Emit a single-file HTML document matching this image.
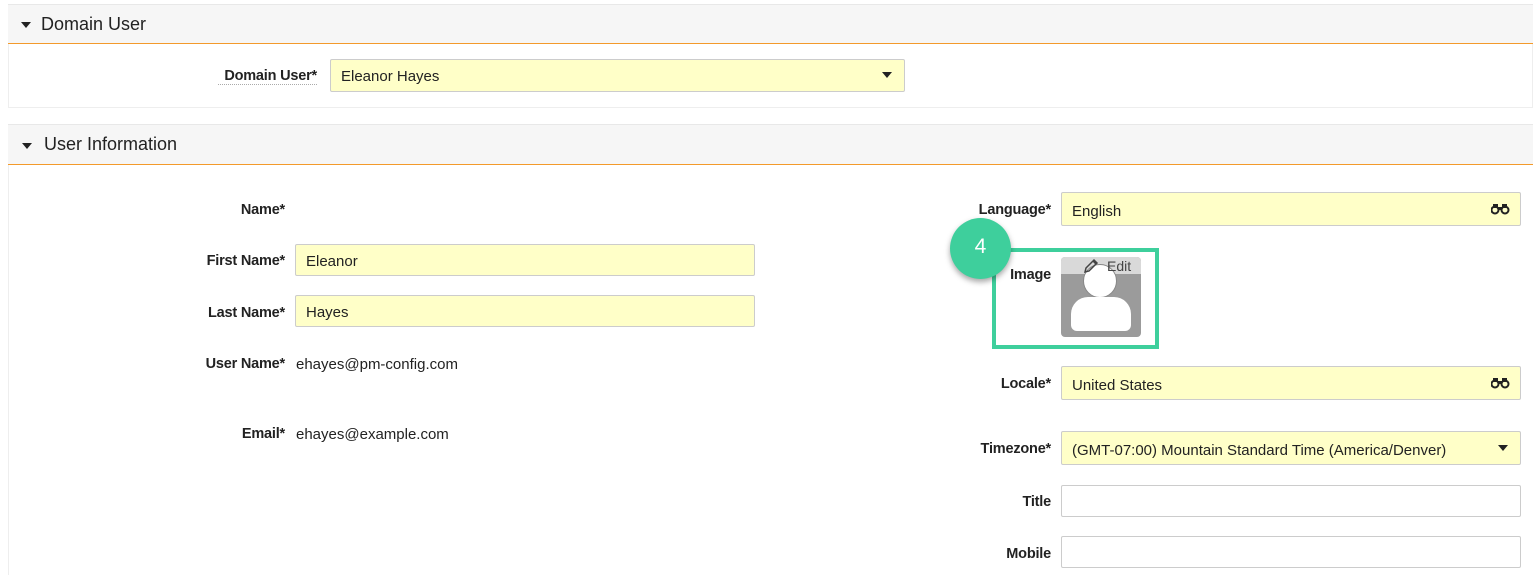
<!DOCTYPE html><html><head><style>
body{margin:0;width:1533px;height:575px;overflow:hidden;background:#fff;font-family:"Liberation Sans",Arial,sans-serif;color:#222;position:relative}
.a{position:absolute}
.hdr{position:absolute;left:8px;right:0;background:#f6f6f6;border-top:1px solid #e8e8e8;border-bottom:1px solid #f39a2b;font-size:18px;color:#222}
.tri{position:absolute;width:0;height:0;border-left:5px solid transparent;border-right:5px solid transparent;border-top:6px solid #222}
.lbl{position:absolute;font-size:14.5px;font-weight:bold;text-align:right;color:#222;letter-spacing:-0.2px}
.inp{position:absolute;box-sizing:border-box;border:1px solid #ccc;border-radius:2px;background:#ffffc8;font-size:15px;padding-left:10px;padding-top:2px;line-height:30px;color:#222}
.val{position:absolute;font-size:15px;color:#222}
.caret{position:absolute;right:12px;top:12px;width:0;height:0;border-left:5px solid transparent;border-right:5px solid transparent;border-top:6px solid #222}
.bino{position:absolute;right:10px;top:10px}
</style></head><body>
<div class="hdr" style="top:4px;height:38px"><div class="tri" style="left:13px;top:17px"></div><span class="a" style="left:33px;top:9px">Domain User</span></div>
<div class="a" style="left:8px;top:44px;right:0;height:63px;border:1px solid #eee;border-top:none"></div>
<div class="lbl" style="top:68px;border-bottom:1px dotted #aaa;line-height:16px;left:218px;width:99px">Domain User*</div>
<div class="inp" style="left:330px;top:59px;width:575px;height:33px">Eleanor Hayes<div class="caret"></div></div>
<div class="hdr" style="top:124px;height:39px"><div class="tri" style="left:14px;top:18px"></div><span class="a" style="left:36px;top:9px">User Information</span></div>
<div class="a" style="left:8px;top:165px;width:1px;height:410px;background:#eee"></div>

<div class="lbl" style="left:100px;width:185px;top:202px">Name*</div>
<div class="lbl" style="left:100px;width:185px;top:253px">First Name*</div>
<div class="inp" style="left:295px;top:244px;width:460px;height:32px">Eleanor</div>
<div class="lbl" style="left:100px;width:185px;top:305px">Last Name*</div>
<div class="inp" style="left:295px;top:295px;width:460px;height:32px">Hayes</div>
<div class="lbl" style="left:100px;width:185px;top:356px">User Name*</div>
<div class="val" style="left:296px;top:356px">ehayes@pm-config.com</div>
<div class="lbl" style="left:100px;width:185px;top:426px">Email*</div>
<div class="val" style="left:296px;top:426px">ehayes@example.com</div>

<svg width="0" height="0" style="position:absolute"><defs><g id="b"><circle cx="4" cy="7" r="3.5" fill="none" stroke="#222" stroke-width="2"/><circle cx="14" cy="7" r="3.5" fill="none" stroke="#222" stroke-width="2"/><rect x="2" y="1" width="5" height="4" fill="#222"/><rect x="11" y="1" width="5" height="4" fill="#222"/><rect x="7" y="4" width="4" height="3" fill="#222"/></g></defs></svg>
<div class="lbl" style="left:900px;width:151px;top:202px">Language*</div>
<div class="inp" style="left:1061px;top:192px;width:460px;height:34px;line-height:33px">English<svg class="bino" width="19" height="12"><use href="#b"/></svg></div>
<div class="lbl" style="left:900px;width:151px;top:267px">Image</div>
<div class="a" style="left:1061px;top:257px;width:80px;height:80px;background:#9b9b9b;border-radius:4px;overflow:hidden">
 <div class="a" style="left:0;top:0;width:80px;height:17px;background:#d9d9d9"></div>
 <div class="a" style="left:22px;top:7px;width:34px;height:34px;border-radius:50%;background:#fff;border:1px solid #888;box-sizing:border-box"></div>
 <div class="a" style="left:10px;top:40px;width:60px;height:34px;border-radius:17px 17px 6px 6px;background:#fff"></div>
 <span class="a" style="left:46px;top:1px;font-size:14px;color:#444">Edit</span>
 <svg class="a" style="left:21px;top:0px" width="18" height="18" viewBox="0 0 18 18"><path d="M3 15 L4 11 L12 3 L15 6 L7 14 Z M11 4 L14 7" fill="none" stroke="#444" stroke-width="1.5"/></svg>
</div>
<div class="a" style="left:992px;top:248px;width:159px;height:93px;border:4px solid #3ecf9c"></div>
<div class="a" style="left:950px;top:218px;width:61px;height:61px;border-radius:50%;background:#3ecf9c;box-shadow:0 3px 6px rgba(0,0,0,.35);color:#fff;font-size:21px;text-align:center;line-height:58px">4</div>
<div class="lbl" style="left:900px;width:151px;top:376px">Locale*</div>
<div class="inp" style="left:1061px;top:366px;width:460px;height:34px;line-height:33px">United States<svg class="bino" width="19" height="12"><use href="#b"/></svg></div>
<div class="lbl" style="left:900px;width:151px;top:441px">Timezone*</div>
<div class="inp" style="left:1061px;top:431px;width:460px;height:34px;line-height:33px">(GMT-07:00) Mountain Standard Time (America/Denver)<div class="caret" style="top:13px"></div></div>
<div class="lbl" style="left:900px;width:151px;top:494px">Title</div>
<div class="inp" style="left:1061px;top:485px;width:460px;height:32px;background:#fff"></div>
<div class="lbl" style="left:900px;width:151px;top:546px">Mobile</div>
<div class="inp" style="left:1061px;top:536px;width:460px;height:32px;background:#fff"></div>
</body></html>
